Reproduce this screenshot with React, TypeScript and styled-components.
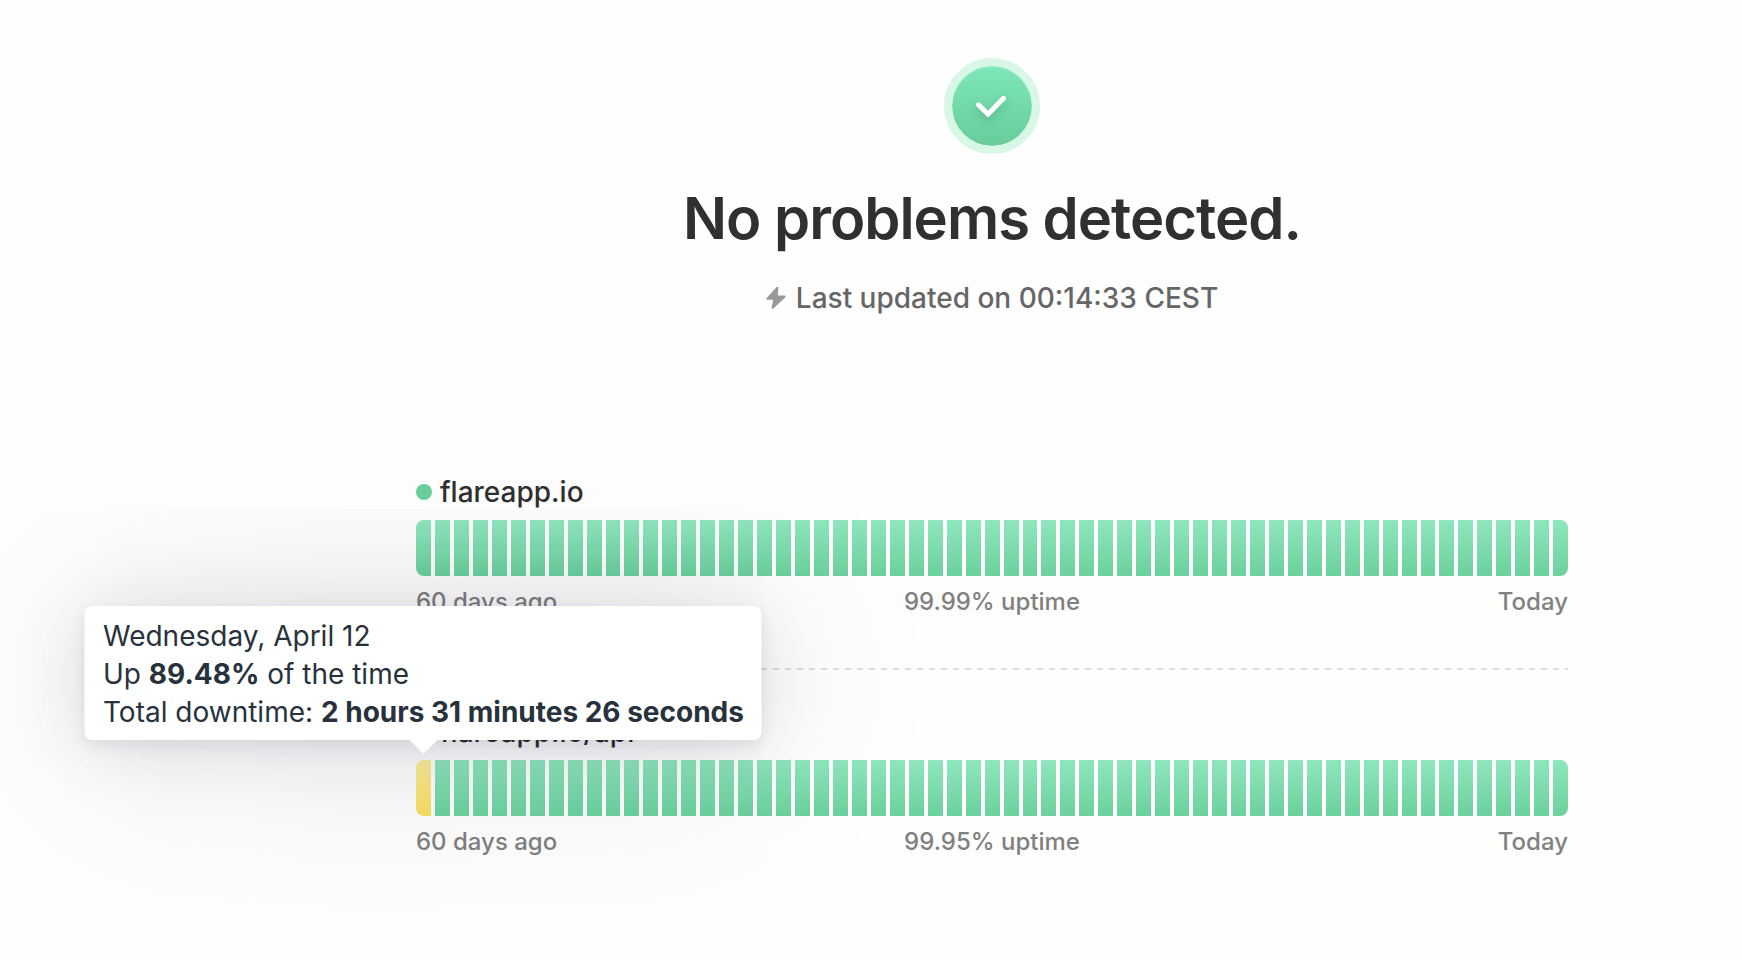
import React from "react";
import styled, { createGlobalStyle } from "styled-components";

const GlobalStyle = createGlobalStyle`
  *, *::before, *::after { box-sizing: border-box; }
  body {
    margin: 0;
    background: #fefefe;
    color: #303030;
    font-family: Inter, "Liberation Sans", sans-serif;
    -webkit-font-smoothing: antialiased;
  }
`;

const Page = styled.main`
  display: flex;
  flex-direction: column;
  align-items: center;
  gap: 154px;
  min-height: 100vh;
  padding: 58px 0 64px 242px;
  overflow: hidden;
`;

const Summary = styled.header`
  display: flex;
  flex-direction: column;
  align-items: center;
`;

const StatusBadge = styled.div`
  display: flex;
  align-items: center;
  justify-content: center;
  width: 96px;
  height: 96px;
  border: 8px solid #d9f7e6;
  border-radius: 50%;
  background: linear-gradient(#7ee6b8, #68cd9b) padding-box;
  box-shadow: inset 0 2px 0 #8beac2;

  svg {
    filter: drop-shadow(0 4px 4px rgba(30, 110, 70, 0.3));
  }
`;

const Title = styled.h1`
  margin: 24px 0 0;
  font-size: 58px;
  font-weight: 600;
  line-height: 80px;
  letter-spacing: -1px;
`;

const Updated = styled.p`
  display: flex;
  align-items: center;
  gap: 10px;
  margin: 20px 0 0;
  color: #666;
  font-size: 28px;
  font-weight: 500;
  line-height: 40px;
`;

const Monitors = styled.div`
  width: 100%;
  max-width: 1152px;
`;

const Divider = styled.hr`
  height: 2px;
  margin: 48px 0 42px;
  border: 0;
  background: repeating-linear-gradient(90deg, #dedede 0 3px, transparent 3px 9px, #dedede 9px 12px);
`;

const MonitorName = styled.h2`
  display: flex;
  align-items: center;
  gap: 8px;
  margin: 0 0 8px;
  font-size: 28px;
  font-weight: 500;
  line-height: 40px;
`;

const Dot = styled.span`
  width: 16px;
  height: 16px;
  border-radius: 50%;
  background: #68cf9a;
`;

const Days = styled.ol`
  display: flex;
  gap: 4px;
  height: 56px;
  margin: 0;
  padding: 0;
  list-style: none;
`;

const Day = styled.li<{ $degraded: boolean }>`
  position: relative;
  flex: 1;
  background: ${(p) =>
    p.$degraded
      ? "linear-gradient(170deg, #fcf09e, #f8de5e)"
      : "linear-gradient(170deg, #90e7be, #6ad09c)"};

  &:first-child { border-radius: 8px 0 0 8px; }
  &:last-child { border-radius: 0 8px 8px 0; }
`;

const Legend = styled.div`
  display: grid;
  grid-template-columns: 1fr auto 1fr;
  margin-top: 8px;
  color: #808080;
  font-size: 24px;
  font-weight: 500;
  line-height: 36px;

  span:last-child { text-align: right; }
`;

const Tooltip = styled.div`
  position: absolute;
  z-index: 1;
  bottom: calc(100% + 20px);
  left: 50%;
  transform: translateX(-50%);
  padding: 11px 18px 9px;
  border-radius: 8px;
  background: #fff;
  box-shadow:
    0 6px 16px rgba(20, 20, 50, 0.08),
    0 6px 80px rgba(20, 20, 50, 0.1),
    0 6px 220px rgba(20, 20, 50, 0.12);
  color: #28323c;
  font-size: 28px;
  font-weight: 400;
  line-height: 38px;
  white-space: nowrap;

  p { margin: 0; }
  strong { font-weight: 700; }

  &::after {
    content: "";
    position: absolute;
    top: 100%;
    left: 50%;
    border: 14px solid transparent;
    border-top-color: #fff;
    border-bottom: 0;
    transform: translateX(-50%);
  }
`;

const DAY_COUNT = 61;

type MonitorData = {
  name: string;
  uptime: string;
  incident?: { day: number; date: string; up: string; downtime: string };
};

const monitors: MonitorData[] = [
  { name: "flareapp.io", uptime: "99.99%" },
  {
    name: "flareapp.io/api",
    uptime: "99.95%",
    incident: {
      day: 0,
      date: "Wednesday, April 12",
      up: "89.48%",
      downtime: "2 hours 31 minutes 26 seconds",
    },
  },
];

function Check() {
  return (
    <svg width="40" height="40" viewBox="0 0 40 40" fill="none" aria-hidden="true">
      <path d="M6.5 18.8 L16 28.3 L31.5 12.3" stroke="#fff" strokeWidth="5" strokeLinecap="round" strokeLinejoin="round" />
    </svg>
  );
}

function Bolt() {
  return (
    <svg width="20" height="24" viewBox="0 0 20 24" fill="#999" aria-hidden="true">
      <path d="M10.4 1.2 L0.5 12.2 Q-.2 13.8 1.2 13.8 H7.2 L5.6 21.8 Q6 23.4 7.4 22.4 L19.4 11.2 Q20.2 9.8 18.8 9.6 H11.8 L12.4 1.8 Q11.8 .2 10.4 1.2 Z" />
    </svg>
  );
}

export default function App() {
  return (
    <>
      <GlobalStyle />
      <Page>
        <Summary>
          <StatusBadge>
            <Check />
          </StatusBadge>
          <Title>No problems detected.</Title>
          <Updated>
            <Bolt />
            <span>Last updated on 00:14:33 CEST</span>
          </Updated>
        </Summary>
        <Monitors>
          {monitors.map(({ name, uptime, incident }, index) => (
            <section key={name}>
              {index > 0 && <Divider />}
              <MonitorName>
                <Dot />
                {name}
              </MonitorName>
              <Days>
                {Array.from({ length: DAY_COUNT }, (_, day) => (
                  <Day key={day} $degraded={incident?.day === day}>
                    {incident?.day === day && (
                      <Tooltip role="tooltip">
                        <p>{incident.date}</p>
                        <p>
                          Up <strong>{incident.up}</strong> of the time
                        </p>
                        <p>
                          Total downtime: <strong>{incident.downtime}</strong>
                        </p>
                      </Tooltip>
                    )}
                  </Day>
                ))}
              </Days>
              <Legend>
                <span>60 days ago</span>
                <span>{uptime} uptime</span>
                <span>Today</span>
              </Legend>
            </section>
          ))}
        </Monitors>
      </Page>
    </>
  );
}
